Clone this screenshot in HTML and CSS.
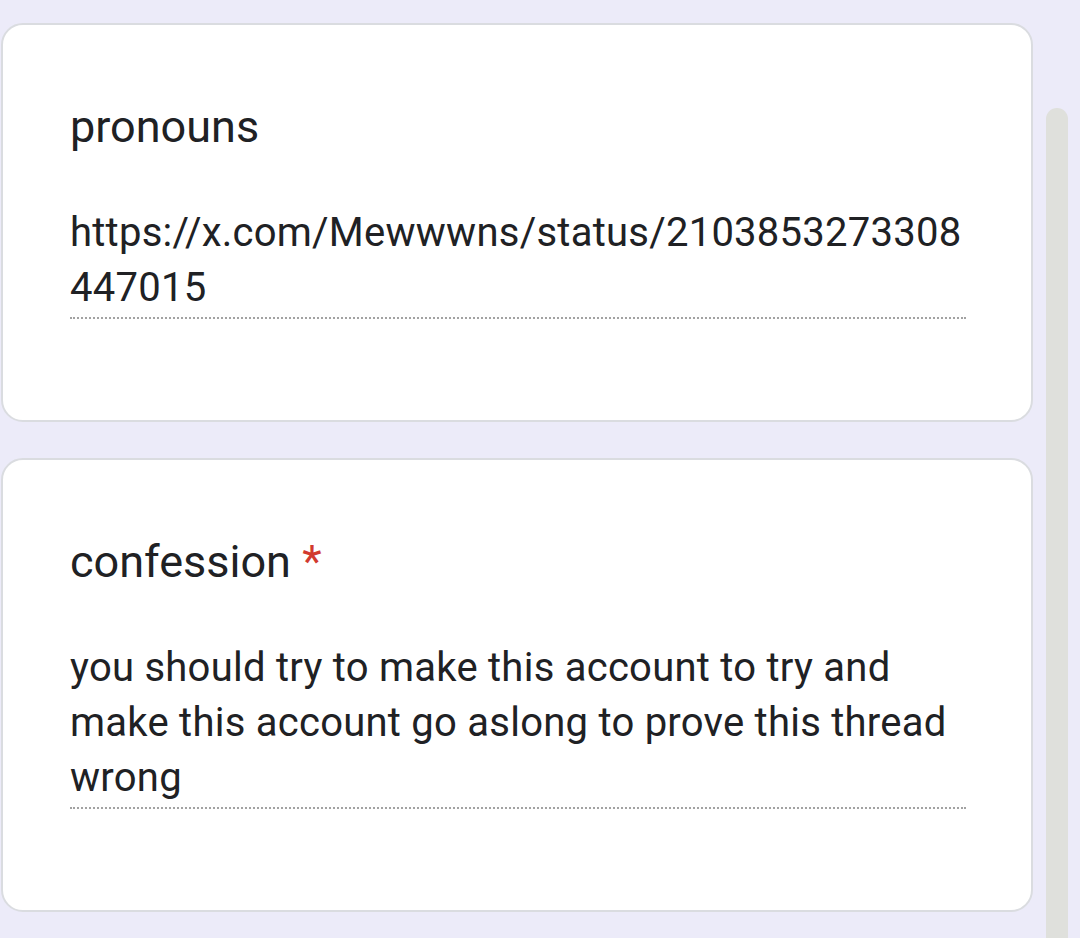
FILE: index.html
```html
<!DOCTYPE html>
<html lang="en">
<head>
<meta charset="utf-8">
<title>Form</title>
<link rel="stylesheet" href="styles.css">
</head>
<body>
<div class="page">
  <main class="form">
    <section class="card">
      <div class="title">pronouns</div>
      <div class="answer">https://x.com/Mewwwns/status/2103853273308447015</div>
    </section>
    <section class="card">
      <div class="title">confession <span class="req">*</span></div>
      <div class="answer">you should try to make this account to try and make this account go aslong to prove this thread wrong</div>
    </section>
  </main>
  <div class="scrollbar"><div class="thumb"></div></div>
</div>
</body>
</html>
```

FILE: styles.css
```css
html, body {
  margin: 0;
  padding: 0;
  background: #ecebf9;
  height: 100%;
  overflow: hidden;
}
.page {
  display: flex;
  align-items: stretch;
  height: 938px;
  font-family: Roboto, "Noto Sans", sans-serif;
  color: #202124;
}
.form {
  display: flex;
  flex-direction: column;
  gap: 36px;
  padding: 23px 0 0 1px;
  width: 1032px;
}
.card {
  background: #ffffff;
  border: 2px solid #dadce0;
  border-radius: 22px;
  padding: 74px 65px 101px 67px;
}
.title {
  font-size: 45px;
  line-height: 56px;
}
.req {
  color: #d23a2e;
}
.answer {
  margin-top: 50px;
  font-size: 40px;
  line-height: 55px;
  letter-spacing: 0.25px;
  overflow-wrap: anywhere;
  padding-bottom: 2px;
  border-bottom: 2px dotted #a2a2a2;
}
.scrollbar {
  margin-left: 13px;
  padding-top: 108px;
  display: flex;
}
.thumb {
  width: 22px;
  background: #dfe0dc;
  border-radius: 11px 11px 0 0;
}
```
